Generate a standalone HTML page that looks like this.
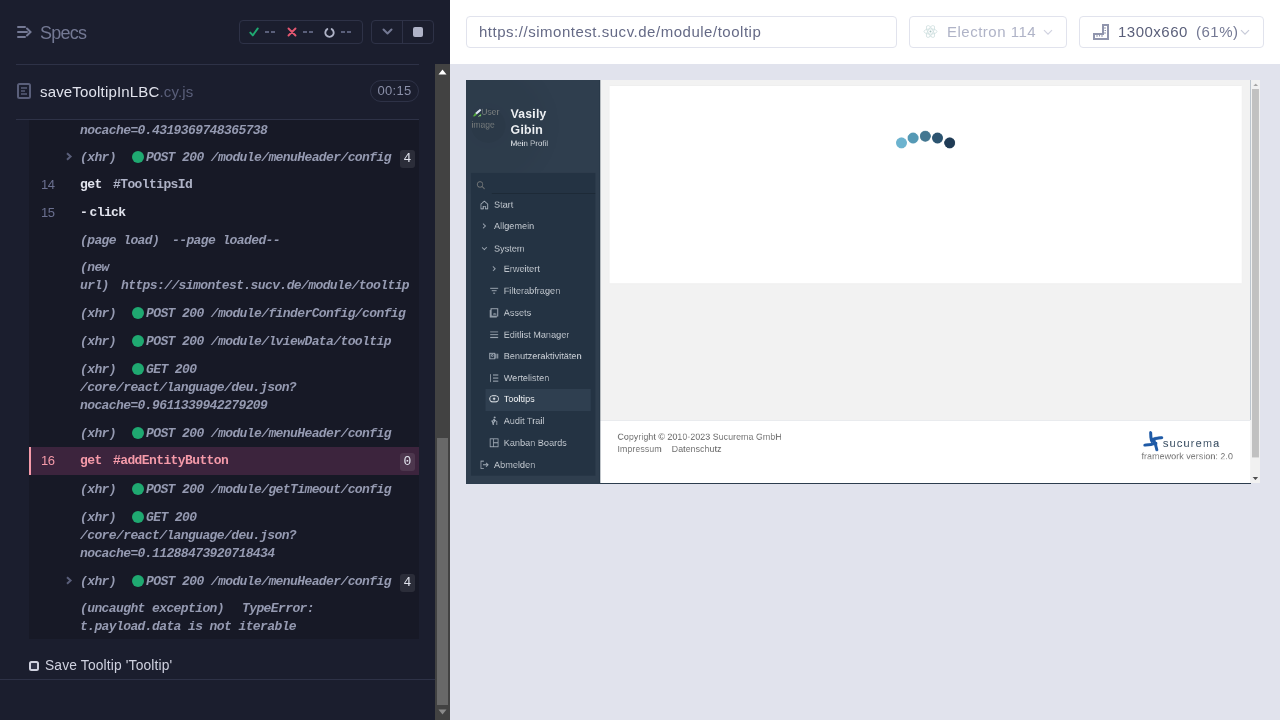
<!DOCTYPE html>
<html><head><meta charset="utf-8">
<style>
*{box-sizing:border-box}
html,body{margin:0;padding:0;width:1280px;height:720px;overflow:hidden}
body{position:relative;font-family:"Liberation Sans",sans-serif;background:#1b1e2e}
.abs{position:absolute}
svg{display:block}
#left{position:absolute;left:0;top:0;width:450px;height:720px;background:#1b1e2e;overflow:hidden;will-change:transform}
#right{position:absolute;left:450px;top:0;width:830px;height:720px;background:#e1e3ed;overflow:hidden;will-change:transform}
.mono{font-family:"Liberation Mono",monospace;font-size:13px;letter-spacing:-0.6px;line-height:18px;white-space:pre}
.red{color:#f59aa9!important}
.ln{position:absolute;height:18px}
.ev{color:#959ab1;font-style:italic;font-weight:bold}
.num{color:#6b7090;font-family:"Liberation Sans",sans-serif;font-size:13px}
.meth{color:#e1e3ed;font-weight:bold}
.msg{color:#afb3c7;font-weight:bold}
.dot{position:absolute;width:12px;height:12px;border-radius:50%;background:#1fa971}
.badge{position:absolute;width:15px;height:18px;border-radius:3px;background:rgba(255,255,255,0.09);color:#e1e3ed;font-family:"Liberation Mono",monospace;letter-spacing:0;font-size:13px;line-height:18px;text-align:center}
.chev{position:absolute}
</style></head><body>
<div id="left">
  <!-- header -->
  <svg class="abs" style="left:17px;top:26px" width="15" height="12" viewBox="0 0 15 12">
    <g stroke="#747994" stroke-width="2" fill="none" stroke-linecap="round">
      <path d="M1 1h7M1 6h9M1 11h7"/><path d="M10 2.5l3.5 3.5-3.5 3.5"/>
    </g>
  </svg>
  <div class="abs" style="left:40px;top:21.5px;font-size:18px;letter-spacing:-0.75px;color:#747994;line-height:22px">Specs</div>

  <div class="abs" style="left:239px;top:20px;width:124px;height:24px;border:1px solid #2e3247;border-radius:4px"></div>
  <svg class="abs" style="left:249px;top:27px" width="10" height="10" viewBox="0 0 10 10"><path d="M1.3 5.6L3.8 8.4 8.8 1.4" stroke="#1fa971" stroke-width="1.9" fill="none" stroke-linecap="round" stroke-linejoin="round"/></svg>
  <div class="abs" style="left:265px;top:31px;width:4px;height:2px;background:#5a5f7a;"></div><div class="abs" style="left:271px;top:31px;width:4px;height:2px;background:#5a5f7a;"></div>
  <svg class="abs" style="left:287px;top:27px" width="10" height="10" viewBox="0 0 10 10"><path d="M1.5 1.5l7 7M8.5 1.5l-7 7" stroke="#e45770" stroke-width="1.9" stroke-linecap="round"/></svg>
  <div class="abs" style="left:303px;top:31px;width:4px;height:2px;background:#5a5f7a;"></div><div class="abs" style="left:309px;top:31px;width:4px;height:2px;background:#5a5f7a;"></div>
  <svg class="abs" style="left:324px;top:27px" width="11" height="11" viewBox="0 0 11 11"><path d="M3.3 2.1A4.2 4.2 0 1 0 7.7 2.1" stroke="#afb3c7" stroke-width="1.9" fill="none" stroke-linecap="round"/></svg>
  <div class="abs" style="left:341px;top:31px;width:4px;height:2px;background:#5a5f7a;"></div><div class="abs" style="left:347px;top:31px;width:4px;height:2px;background:#5a5f7a;"></div>

  <div class="abs" style="left:371px;top:20px;width:63px;height:24px;border:1px solid #2e3247;border-radius:4px"></div>
  <div class="abs" style="left:402px;top:20px;width:1px;height:24px;background:#2e3247"></div>
  <svg class="abs" style="left:382px;top:28px" width="11" height="7" viewBox="0 0 11 7"><path d="M1.5 1.5l4 4 4-4" stroke="#747994" stroke-width="2" fill="none" stroke-linecap="round" stroke-linejoin="round"/></svg>
  <div class="abs" style="left:413px;top:27px;width:10px;height:10px;background:#afb3c7;border-radius:2px"></div>

  <div class="abs" style="left:16px;top:64px;width:403px;height:1px;background:#2e3247"></div>

  <!-- spec title -->
  <svg class="abs" style="left:17px;top:83px" width="14" height="16" viewBox="0 0 14 16"><rect x="1" y="1" width="12" height="14" rx="1.5" stroke="#5a5f7a" stroke-width="2" fill="none"/><path d="M4 5h6M4 8h4M4 11h6" stroke="#5a5f7a" stroke-width="1.5"/></svg>
  <div class="abs" style="left:40px;top:82px;font-size:15px;letter-spacing:0.17px;line-height:20px;color:#e1e3ed;white-space:pre">saveTooltipInLBC<span style="color:#5a5f7a">.cy.js</span></div>
  <div class="abs" style="left:370px;top:80px;width:49px;height:22px;border:1px solid #2e3247;border-radius:11px;color:#8a8fa8;font-size:13px;letter-spacing:0.3px;line-height:20px;text-align:center">00:15</div>
  <div class="abs" style="left:16px;top:119px;width:403px;height:1px;background:#2e3247"></div>

  <!-- command log -->
  <div class="abs mono" id="log" style="left:29px;top:120px;width:390px;height:519px;background:#171926;overflow:hidden">
<div class="ln ev" style="left:51px;top:-16.5px">/core/react/language/deu.json?</div>
<div class="ln ev" style="left:51px;top:1.5px">nocache=0.4319369748365738</div>
<svg class="chev" style="left:36px;top:32px" width="8" height="9" viewBox="0 0 8 9"><path d="M2 1.2l3.6 3.3L2 7.8" stroke="#5a5f7a" stroke-width="2" fill="none"/></svg>
<div class="ln ev" style="left:51px;top:28.5px">(xhr)</div>
<div class="dot" style="left:103px;top:31px"></div>
<div class="ln ev" style="left:117px;top:28.5px">POST 200 /module/menuHeader/config</div>
<div class="badge" style="left:371px;top:29.5px">4</div>
<div class="ln num" style="left:12px;top:55.5px">14</div>
<div class="ln meth" style="left:51px;top:55.5px">get</div>
<div class="ln msg" style="left:84px;top:55.5px">#TooltipsId</div>
<div class="ln num" style="left:12px;top:83.5px">15</div>
<div class="ln meth" style="left:51px;top:83.5px">-</div>
<div class="ln meth" style="left:60.5px;top:83.5px">click</div>
<div class="ln ev" style="left:51px;top:111.5px">(page load)</div>
<div class="ln ev" style="left:143px;top:111.5px">--page loaded--</div>
<div class="ln ev" style="left:51px;top:138.5px">(new</div>
<div class="ln ev" style="left:51px;top:157.0px">url)</div>
<div class="ln ev" style="left:92px;top:157.0px">https://simontest.sucv.de/module/tooltip</div>
<div class="ln ev" style="left:51px;top:184.5px">(xhr)</div>
<div class="dot" style="left:103px;top:187px"></div>
<div class="ln ev" style="left:117px;top:184.5px">POST 200 /module/finderConfig/config</div>
<div class="ln ev" style="left:51px;top:212.5px">(xhr)</div>
<div class="dot" style="left:103px;top:215px"></div>
<div class="ln ev" style="left:117px;top:212.5px">POST 200 /module/lviewData/tooltip</div>
<div class="ln ev" style="left:51px;top:240.5px">(xhr)</div>
<div class="dot" style="left:103px;top:243px"></div>
<div class="ln ev" style="left:117px;top:240.5px">GET 200</div>
<div class="ln ev" style="left:51px;top:259.0px">/core/react/language/deu.json?</div>
<div class="ln ev" style="left:51px;top:277.0px">nocache=0.9611339942279209</div>
<div class="ln ev" style="left:51px;top:304.5px">(xhr)</div>
<div class="dot" style="left:103px;top:307px"></div>
<div class="ln ev" style="left:117px;top:304.5px">POST 200 /module/menuHeader/config</div>
<div class="abs" style="left:0;top:327px;width:390px;height:28px;background:#3c243d"></div>
<div class="abs" style="left:0;top:327px;width:2px;height:28px;background:#f59aa9"></div>
<div class="ln num" style="left:12px;top:331.5px;color:#f59aa9">16</div>
<div class="ln meth red" style="left:51px;top:331.5px">get</div>
<div class="ln msg red" style="left:84px;top:331.5px">#addEntityButton</div>
<div class="badge" style="left:371px;top:332.5px">0</div>
<div class="ln ev" style="left:51px;top:360.5px">(xhr)</div>
<div class="dot" style="left:103px;top:363px"></div>
<div class="ln ev" style="left:117px;top:360.5px">POST 200 /module/getTimeout/config</div>
<div class="ln ev" style="left:51px;top:388.5px">(xhr)</div>
<div class="dot" style="left:103px;top:391px"></div>
<div class="ln ev" style="left:117px;top:388.5px">GET 200</div>
<div class="ln ev" style="left:51px;top:407.0px">/core/react/language/deu.json?</div>
<div class="ln ev" style="left:51px;top:425.0px">nocache=0.11288473920718434</div>
<svg class="chev" style="left:36px;top:456px" width="8" height="9" viewBox="0 0 8 9"><path d="M2 1.2l3.6 3.3L2 7.8" stroke="#5a5f7a" stroke-width="2" fill="none"/></svg>
<div class="ln ev" style="left:51px;top:452.5px">(xhr)</div>
<div class="dot" style="left:103px;top:455px"></div>
<div class="ln ev" style="left:117px;top:452.5px">POST 200 /module/menuHeader/config</div>
<div class="badge" style="left:371px;top:453.5px">4</div>
<div class="ln ev" style="left:51px;top:479.5px">(uncaught exception)</div>
<div class="ln ev" style="left:213px;top:479.5px">TypeError:</div>
<div class="ln ev" style="left:51px;top:497.5px">t.payload.data is not iterable</div>
<!-- /log --></div>

  <!-- bottom -->
  <div class="abs" style="left:29px;top:661px;width:10px;height:10px;border:2px solid #d0d2e0;border-radius:2.5px;background:#2e3247"></div>
  <div class="abs" style="left:45px;top:657px;font-size:13.8px;letter-spacing:0.16px;line-height:17px;color:#d0d2e0;white-space:pre">Save Tooltip 'Tooltip'</div>
  <div class="abs" style="left:0;top:679px;width:435px;height:1px;background:#2e3247"></div>

  <!-- scrollbar -->
  <div class="abs" style="left:435px;top:64px;width:15px;height:656px;background:#424242"></div>
  <div class="abs" style="left:437px;top:438px;width:11px;height:267px;background:#686868"></div>
  <svg class="abs" style="left:438px;top:69px" width="9" height="6" viewBox="0 0 9 6"><path d="M0.5 5.5L4.5 0.5 8.5 5.5z" fill="#fff"/></svg>
  <svg class="abs" style="left:438px;top:709px" width="9" height="6" viewBox="0 0 9 6"><path d="M0.5 0.5L4.5 5.5 8.5 0.5z" fill="#8a8a8a"/></svg>
</div>

<div id="right">
  <div class="abs" style="left:0;top:0;width:830px;height:64px;background:#fff"></div>
  <div class="abs" style="left:16px;top:16px;width:431px;height:32px;border:1px solid #e1e3ed;border-radius:4px;background:#fff"></div>
  <div class="abs" style="left:29px;top:23px;font-size:15px;letter-spacing:0.52px;line-height:18px;color:#656a86;white-space:pre">https://simontest.sucv.de/module/tooltip</div>

  <div class="abs" style="left:459px;top:16px;width:158px;height:32px;border:1px solid #e1e3ed;border-radius:4px"></div>
  <svg class="abs" style="left:473px;top:23px" width="15" height="17" viewBox="0 0 15 17"><g stroke="#d3e2e2" stroke-width="0.9" fill="none"><ellipse cx="7.5" cy="8.5" rx="6.5" ry="2.6"/><ellipse cx="7.5" cy="8.5" rx="6.5" ry="2.6" transform="rotate(60 7.5 8.5)"/><ellipse cx="7.5" cy="8.5" rx="6.5" ry="2.6" transform="rotate(120 7.5 8.5)"/></g><circle cx="7.5" cy="8.5" r="1" fill="#a9c3c3"/></svg>
  <div class="abs" style="left:497px;top:23px;font-size:15px;letter-spacing:0.5px;line-height:18px;color:#afb3c7;white-space:pre">Electron 114</div>
  <svg class="abs" style="left:593px;top:29px" width="10" height="7" viewBox="0 0 10 7"><path d="M1 1.2l4 4 4-4" stroke="#d0d2e0" stroke-width="1.2" fill="none"/></svg>
  <div class="abs" style="left:629px;top:16px;width:185px;height:32px;border:1px solid #e1e3ed;border-radius:4px"></div>
  <svg class="abs" style="left:643px;top:24px" width="16" height="16" viewBox="0 0 16 16"><path d="M1 15V10h9V1h5v14z" stroke="#9095ad" stroke-width="2" fill="none" stroke-linejoin="miter"/><path d="M4 11v2M6.5 11v1.5M9 11v2M11 4h2M11.5 6.5h1.5M11 9h2" stroke="#9095ad" stroke-width="1"/></svg>
  <div class="abs" style="left:668px;top:23px;font-size:15px;letter-spacing:0.5px;line-height:18px;color:#5a5f7a;white-space:pre">1300x660</div>
  <div class="abs" style="left:746px;top:23px;font-size:15px;letter-spacing:0.5px;line-height:18px;color:#747994;white-space:pre">(61%)</div>
  <svg class="abs" style="left:790px;top:29px" width="10" height="7" viewBox="0 0 10 7"><path d="M1 1.2l4 4 4-4" stroke="#c8cbd9" stroke-width="1.2" fill="none"/></svg>

  <!-- AUT frame -->
  <div class="abs" id="aut" style="left:16px;top:80px;width:794px;height:403px;background:#f2f2f2;overflow:hidden">
<div id="autin" style="position:absolute;left:0;top:0;width:1300px;height:660px;transform:scale(0.61077);transform-origin:0 0;background:#f2f2f2;font-family:'Liberation Sans',sans-serif">
  <!-- sidebar -->
  <div class="abs" style="left:0;top:0;width:220px;height:660px;background:#2f3e4e;border-right:2px solid #283848"></div>
  <div class="abs" style="left:-84px;top:-45px;width:240px;height:240px;border-radius:50%;background:radial-gradient(circle, rgba(0,0,0,0.035) 0%, rgba(0,0,0,0.03) 45%, rgba(0,0,0,0) 70%)"></div>
  <div class="abs" style="left:8px;top:46px;width:57px;height:57px;border-radius:50%;background:rgba(0,0,0,0.045)"></div>
  <svg class="abs" style="left:10.8px;top:47px" width="14" height="13" viewBox="0 0 14 13"><path d="M4 7L11.5 0.5 13.8 1.8 13.8 3 6.5 9.5z" fill="#dde3f3"/><path d="M0.3 12.5L4 7 6.5 9.5 3.5 12.5z" fill="#56b33b"/><path d="M8.5 12.5L13.8 8.2V12.5z" fill="#56b33b"/><path d="M9.5 12.5L13.8 10" stroke="#d6dcec" stroke-width="0.8"/></svg>
  <div class="abs" style="left:25px;top:42px;font-size:14px;line-height:20.7px;color:#767b7c">User</div>
  <div class="abs" style="left:9px;top:63px;font-size:14px;line-height:20.7px;color:#767b7c">image</div>
  <div class="abs" style="left:73px;top:41.5px;font-size:20px;letter-spacing:0.35px;line-height:26.7px;font-weight:bold;color:#eef1f4">Vasily<br>Gibin</div>
  <div class="abs" style="left:73px;top:96px;font-size:13px;line-height:16px;color:#d6dbe0">Mein Profil</div>

  <div class="abs" style="left:8px;top:152px;width:204px;height:496px;background:#243343"></div>
  <svg class="abs" style="left:17px;top:165px" width="15" height="15" viewBox="0 0 15 15"><circle cx="6" cy="6" r="4.5" stroke="#76797a" stroke-width="1.5" fill="none"/><path d="M9.3 9.3l4.2 4.2" stroke="#76797a" stroke-width="1.5"/></svg>
  <div class="abs" style="left:42px;top:184.5px;width:170px;height:2px;background:#1d2a37"></div>
  <div id="nav">
<div class="abs" style="left:32px;top:506px;width:172px;height:36px;background:#2f3f50"></div>
<div class="abs" style="left:45.8px;top:194.2px;font-size:15px;line-height:20px;color:#c3c9d0;white-space:pre">Start</div>
<svg class="abs" style="left:22px;top:196.2px" width="16" height="16" viewBox="0 0 16 16"><path d="M2.5 7.3L8 2.3l5.5 5V15h-3.7v-4.3H6.2V15H2.5z" stroke="#a3adb8" stroke-width="1.5" fill="none" stroke-linejoin="round"/></svg>
<div class="abs" style="left:45.8px;top:229.3px;font-size:15px;line-height:20px;color:#c3c9d0;white-space:pre">Allgemein</div>
<svg class="abs" style="left:22px;top:231.3px" width="16" height="16" viewBox="0 0 16 16"><path d="M6 4.2l3.8 3.8L6 11.8" stroke="#a3adb8" stroke-width="1.5" fill="none"/></svg>
<div class="abs" style="left:45.8px;top:265.5px;font-size:15px;line-height:20px;color:#c3c9d0;white-space:pre">System</div>
<svg class="abs" style="left:22px;top:267.5px" width="16" height="16" viewBox="0 0 16 16"><path d="M4.2 6l3.8 3.8L11.8 6" stroke="#a3adb8" stroke-width="1.5" fill="none"/></svg>
<div class="abs" style="left:61.7px;top:299.4px;font-size:15px;line-height:20px;color:#c3c9d0;white-space:pre">Erweitert</div>
<svg class="abs" style="left:38px;top:301.4px" width="16" height="16" viewBox="0 0 16 16"><path d="M6 4.2l3.8 3.8L6 11.8" stroke="#a3adb8" stroke-width="1.5" fill="none"/></svg>
<div class="abs" style="left:61.7px;top:334.9px;font-size:15px;line-height:20px;color:#c3c9d0;white-space:pre">Filterabfragen</div>
<svg class="abs" style="left:37.5px;top:336.9px" width="16" height="16" viewBox="0 0 16 16"><path d="M1.5 4h13M4 8h8M6.5 12h3" stroke="#a3adb8" stroke-width="1.6"/></svg>
<div class="abs" style="left:61.7px;top:371.0px;font-size:15px;line-height:20px;color:#c3c9d0;white-space:pre">Assets</div>
<svg class="abs" style="left:37.5px;top:373.0px" width="16" height="16" viewBox="0 0 16 16"><rect x="3" y="1.5" width="11" height="12" stroke="#a3adb8" stroke-width="1.5" fill="none"/><path d="M1.5 4v11h11" stroke="#a3adb8" stroke-width="1.5" fill="none"/><path d="M6 11l2-2.5 1.5 1.5 1.5-1 1 2z" fill="#a3adb8"/></svg>
<div class="abs" style="left:61.7px;top:406.6px;font-size:15px;line-height:20px;color:#c3c9d0;white-space:pre">Editlist Manager</div>
<svg class="abs" style="left:37.5px;top:408.6px" width="16" height="16" viewBox="0 0 16 16"><path d="M1.5 3.5h13M1.5 8h13M1.5 12.5h13" stroke="#a3adb8" stroke-width="1.6"/></svg>
<div class="abs" style="left:61.7px;top:442.1px;font-size:15px;line-height:20px;color:#c3c9d0;white-space:pre">Benutzeraktivitäten</div>
<svg class="abs" style="left:37.5px;top:444.1px" width="16" height="16" viewBox="0 0 16 16"><rect x="1" y="3.5" width="8" height="9" stroke="#a3adb8" stroke-width="1.5" fill="none"/><circle cx="5" cy="7" r="1.5" stroke="#a3adb8" stroke-width="1.2" fill="none"/><path d="M11 4v8M14 4v8" stroke="#a3adb8" stroke-width="1.5"/></svg>
<div class="abs" style="left:61.7px;top:478.1px;font-size:15px;line-height:20px;color:#c3c9d0;white-space:pre">Wertelisten</div>
<svg class="abs" style="left:37.5px;top:480.1px" width="16" height="16" viewBox="0 0 16 16"><path d="M2 1.5v13M6 3h9M6 8h9M6 13h9" stroke="#a3adb8" stroke-width="1.5"/></svg>
<div class="abs" style="left:61.7px;top:511.7px;font-size:15px;line-height:20px;color:#f2f4f6;white-space:pre">Tooltips</div>
<svg class="abs" style="left:37.5px;top:513.7px" width="16" height="16" viewBox="0 0 16 16"><rect x="1" y="3" width="14" height="10" rx="4.5" stroke="#e6eaee" stroke-width="1.5" fill="none"/><path d="M8 5.8v4.4M5.8 8h4.4" stroke="#e6eaee" stroke-width="1.4"/></svg>
<div class="abs" style="left:61.7px;top:547.8px;font-size:15px;line-height:20px;color:#c3c9d0;white-space:pre">Audit Trail</div>
<svg class="abs" style="left:37.5px;top:549.8px" width="16" height="16" viewBox="0 0 16 16"><circle cx="9" cy="2.5" r="1.5" fill="#a3adb8"/><path d="M8 5l-2.5 4 1 6M8 5l1 4-2 2 0 4M8.5 6.5l3 2M12.5 8v7M5 7.5l-1.5 1.5" stroke="#a3adb8" stroke-width="1.5" fill="none"/></svg>
<div class="abs" style="left:61.7px;top:583.6px;font-size:15px;line-height:20px;color:#c3c9d0;white-space:pre">Kanban Boards</div>
<svg class="abs" style="left:37.5px;top:585.6px" width="16" height="16" viewBox="0 0 16 16"><rect x="1.5" y="1.5" width="13" height="13" stroke="#a3adb8" stroke-width="1.5" fill="none"/><path d="M7 1.5v13M7 8h7.5" stroke="#a3adb8" stroke-width="1.5"/></svg>
<div class="abs" style="left:45.8px;top:620.1px;font-size:15px;line-height:20px;color:#c3c9d0;white-space:pre">Abmelden</div>
<svg class="abs" style="left:22px;top:622.1px" width="16" height="16" viewBox="0 0 16 16"><path d="M7 2H2.5v12H7" stroke="#a3adb8" stroke-width="1.5" fill="none"/><path d="M6 8h8M11 5l3 3-3 3" stroke="#a3adb8" stroke-width="1.5" fill="none"/></svg>
</div>

  <!-- content -->
  <div class="abs" style="left:235px;top:10px;width:1035px;height:323px;background:#fff;box-shadow:0 0 2px rgba(0,0,0,0.06)"></div>
  <div class="abs" style="left:704px;top:94px;width:18px;height:18px;border-radius:50%;background:#6cb3cf"></div>
  <div class="abs" style="left:723px;top:86px;width:18px;height:18px;border-radius:50%;background:#5599b5"></div>
  <div class="abs" style="left:743px;top:83px;width:18px;height:18px;border-radius:50%;background:#437791"></div>
  <div class="abs" style="left:763px;top:86px;width:18px;height:18px;border-radius:50%;background:#2c5470"></div>
  <div class="abs" style="left:783px;top:94px;width:18px;height:18px;border-radius:50%;background:#1f3b55"></div>

  <!-- footer -->
  <div class="abs" style="left:220px;top:556.5px;width:1064px;height:103.5px;background:#fff;border-top:1.5px solid #e9ebee"></div>
  <div class="abs" style="left:248px;top:575px;font-size:14.5px;letter-spacing:0.08px;line-height:19.5px;color:#6b6b6b;white-space:pre">Copyright © 2010-2023 Sucurema GmbH<br>Impressum    Datenschutz</div>
  <svg class="abs" style="left:1103.5px;top:569.8px" width="45.8" height="42.6" viewBox="0 0 28 26"><g stroke="#1f5aa6" stroke-width="3" fill="none" stroke-linecap="round"><path d="M10.3 4.6Q10.2 9 11.6 13.2"/><path d="M11.2 11.8Q16 9.6 21.4 9.6"/><path d="M13.8 12.6Q15.8 17 16.5 21.6"/><path d="M15.6 15.2Q9.5 16.8 4.6 17"/></g></svg>
  <div class="abs" style="left:1141px;top:585px;font-size:18px;line-height:20px;letter-spacing:1.9px;color:#34495e">sucurema</div>
  <div class="abs" style="left:1106px;top:606.5px;font-size:14.8px;line-height:18px;color:#777">framework version: 2.0</div>
  

  <!-- right border + scrollbar -->
  <div class="abs" style="left:1284px;top:0;width:1px;height:557px;background:#b9c2cc"></div>
  <div class="abs" style="left:1285px;top:0;width:15px;height:660px;background:#f1f1f1"></div>
  <div class="abs" style="left:1287px;top:15px;width:11px;height:603px;background:#c1c1c1"></div>
  <svg class="abs" style="left:1288.5px;top:6px" width="8" height="4" viewBox="0 0 8 4"><path d="M0 4L4 0 8 4z" fill="#a3a3a3"/></svg>
  <svg class="abs" style="left:1288px;top:649.5px" width="9" height="5" viewBox="0 0 9 5"><path d="M0 0L4.5 5 9 0z" fill="#505050"/></svg>
</div>
<!-- /aut --></div>
  <div class="abs" style="left:16px;top:483px;width:785px;height:1px;background:#2c3d4e"></div>
</div>
</body></html>
